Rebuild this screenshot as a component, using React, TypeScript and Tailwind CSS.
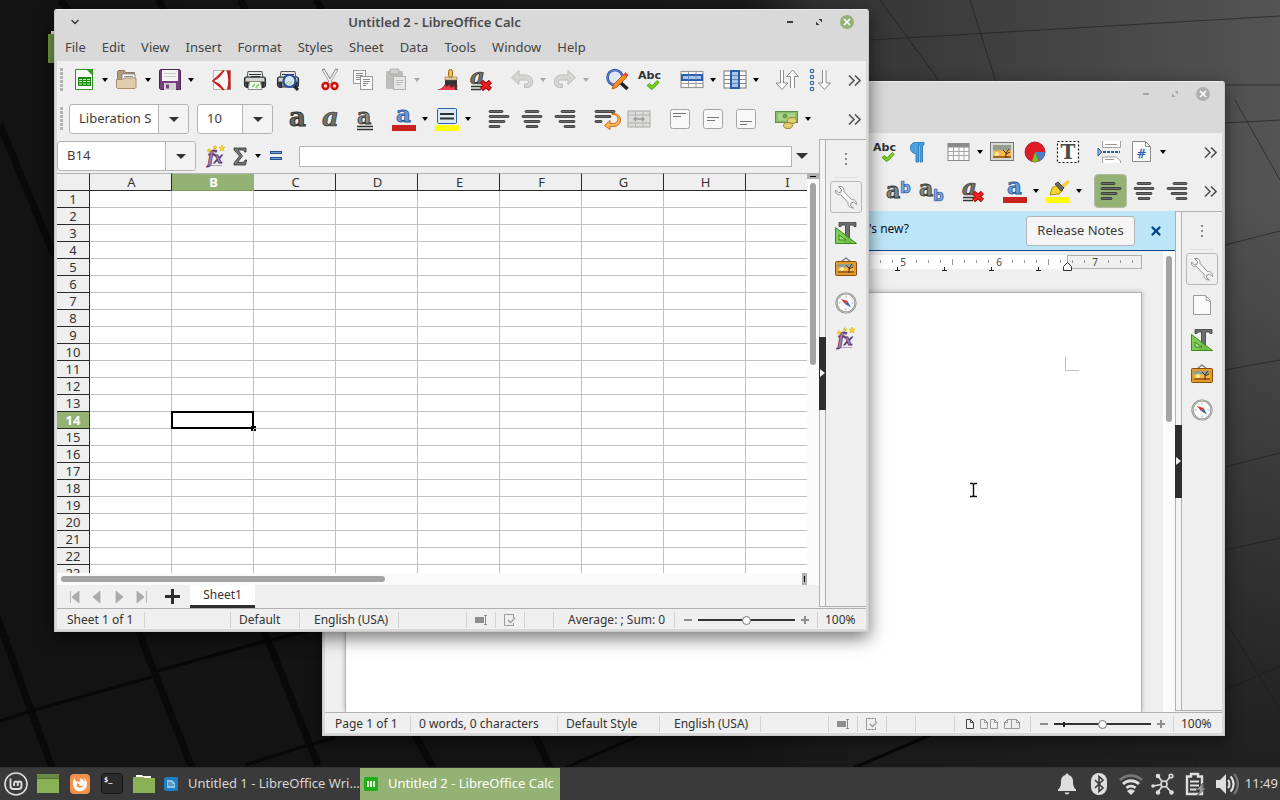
import React from 'react';
import { ChevronDown, X } from 'lucide-react';

const SERIF = '"DejaVu Serif", "Liberation Serif", serif';
const SANS = '"DejaVu Sans", "Liberation Sans", sans-serif';

const CHECK = 'M9 17.5l2.6-2 2.4 2.4 5.2-5.4 2 1.8-7.2 7.4z';

const alignBars = (rows: number[][]) =>
    rows.map(([x, w], i) => (
        <rect key={i} x={x} y={3.5 + i * 5} width={w} height="2" rx="1" fill="#6a6c69" stroke="#2c2e2d" strokeWidth="0.8" />
    ));

const clearFormat = (
    <>
        <text x="1" y="16" fontFamily={SERIF} fontSize="23" fontStyle="italic" fontWeight="bold" fill="#6f716f" stroke="#2e3432" strokeWidth="0.7">a</text>
        <path d="M2 18.500h11M2 21.500h10" stroke="#2e3432" strokeWidth="1.400" />
        <path d="M12.500 13.500l9 8m0-8l-9 8" stroke="#a40000" strokeWidth="4.600" />
        <path d="M13 14l8 7m0-7l-8 7" stroke="#f02020" strokeWidth="2.800" />
    </>
);

const printerBody = (
    <>
        <path d="M5 3.500h14l1 6H4z" fill="#e8e8e6" stroke="#555753" />
        <path d="M6 6.500h12M8 8.500h9" stroke="#2e3432" strokeWidth="1.2" />
        <rect x="1.500" y="9" width="21" height="10" rx="2" fill="#8a8c89" stroke="#2e3436" strokeWidth="1.2" />
        <rect x="3" y="10" width="18" height="3" fill="#d3d7cf" />
        <path d="M2 14h4v6H3zM18 14h4l-1 6h-3z" fill="#2e3436" />
    </>
);

const fxGlyph = (
    <>
        <text x="3.500" y="18.500" fontFamily={SERIF} fontSize="16" fontStyle="italic" fontWeight="bold" fill="#a882b0" stroke="#5c3566" strokeWidth="0.8">f</text>
        <text x="10" y="19" fontFamily={SERIF} fontSize="14" fontStyle="italic" fontWeight="bold" fill="#a882b0" stroke="#5c3566" strokeWidth="0.8">x</text>
        <path d="M5 21.500h13" stroke="#5c3566" strokeOpacity="0.4" />
        <path d="M18 1l.8 2 2.200.3-1.600 1.500.5 2.200-1.900-1.100-1.900 1.100.5-2.200L15 3.300l2.200-.3zM11 1.500l.6 1.200 1.300.2-1 .9.300 1.300-1.200-.6-1.200.6.300-1.300-1-.9 1.300-.2zM5 4.500l.6 1.200 1.300.2-1 .9.300 1.300-1.200-.6-1.200.6.300-1.300-1-.9 1.300-.2z" fill="#f7d723" stroke="#d6a800" strokeWidth="0.5" />
    </>
);

const sunset = (x: number, y: number, w: number, h: number) => (
    <>
        <rect x={x} y={y} width={w} height={h} fill="#f8b84e" />
        <rect x={x} y={y} width={w} height={h / 2 - 1} fill="#93a08e" />
        <rect x={x} y={y + h - 2} width={w} height="2" fill="#a8641c" />
        <circle cx={x + 4} cy={y + h - 4} r="2" fill="#fff3a0" />
        <path d={`M${x + w - 5} ${y + h}v-5l-3-3m3 3l3-4m-3 5l4-2`} stroke="#4d3010" strokeWidth="1" fill="none" />
    </>
);

const ICONS: Record<string, React.ReactNode> = {
    newSheet: (
        <>
            <path d="M3.500 1.500h12l5 5v15h-17z" fill="#fdfdfd" stroke="#2f8f1f" />
            <path d="M14 1h7v7z" fill="#2a9a1c" />
            <rect x="6" y="9" width="13" height="9" fill="#1f8a14" />
            <path d="M7 11.500h3m1 0h3m1 0h3M7 13.500h3m1 0h3m1 0h3M7 16h3m1 0h3m1 0h3" stroke="#c9f5b8" strokeWidth="1.2" />
        </>
    ),
    open: (
        <>
            <path d="M2.500 20V3.500l1-1h6l1 2h9v5z" fill="#b39b78" stroke="#8f7a5a" />
            <path d="M7 6h13v8H7z" fill="#fff" stroke="#777" strokeWidth="0.8" />
            <path d="M9 8.500h9" stroke="#888" />
            <path d="M1.500 11.500l6 0 1.500-1.500h12v9.500l-1 1H2.500l-1-1z" fill="#e0ccab" stroke="#a58f6c" />
        </>
    ),
    save: (
        <>
            <path d="M1.500 2.500l1-1h19l1 1v19h-20l-1-1z" fill="#75407e" stroke="#4e2457" />
            <rect x="4" y="2" width="16" height="11" fill="#f4f4f2" />
            <path d="M6 5.500h12M6 8.500h12" stroke="#c8c8c6" />
            <rect x="6" y="15" width="12" height="7" fill="#d3d3d1" />
            <rect x="8" y="16.500" width="3" height="4" fill="#75407e" />
        </>
    ),
    pdf: (
        <>
            <rect x="3.500" y="2.500" width="17" height="19" fill="#f6f6f6" stroke="#b5b5b5" />
            <path d="M14 2.500L3 13l11 9" fill="none" stroke="#cc1b1b" strokeWidth="1.600" />
            <path d="M14 2.500c-2 5-6 9-11 10.500 5 1 9 4 11 9h-1.500C10 18 7 15.500 3 13c4-2.500 7-5.500 9.500-10.500z" fill="#cc1b1b" />
            <path d="M16.500 2.500h4v19h-3.500c2-6 1.500-13-.5-19z" fill="#cc1b1b" />
        </>
    ),
    print: (
        <>
            {printerBody}
            <path d="M6.500 13.500h11l1.500 8H5z" fill="#f4fbf0" stroke="#888a85" />
            <path d="M9 19l3-3m1 4l3-4" stroke="#7fd15a" strokeWidth="1.500" />
        </>
    ),
    preview: (
        <>
            {printerBody}
            <path d="M17 17l5 5" stroke="#222" strokeWidth="3" />
            <circle cx="13.500" cy="13" r="6" fill="#d7e6f5" stroke="#2b4ea0" strokeWidth="2.200" />
            <path d="M10 16l3-3m0 4l3-4" stroke="#7fd15a" />
        </>
    ),
    cut: (
        <>
            <path d="M5 1l8.500 14.500M19 1l-8.500 14.500" stroke="#7c7e7a" strokeWidth="3" />
            <path d="M5.500 2l7.500 13M18.500 2l-7.500 13" stroke="#eeeeec" strokeWidth="1.600" />
            <circle cx="7.500" cy="18" r="3" fill="#f6d0d0" stroke="#cc1010" strokeWidth="2.400" />
            <circle cx="16.500" cy="18" r="3" fill="#f6d0d0" stroke="#cc1010" strokeWidth="2.400" />
        </>
    ),
    copy: (
        <>
            <rect x="2.500" y="2.500" width="12" height="13" fill="#fafafa" stroke="#999" />
            <path d="M5 5.500h7M5 7.500h7M5 9.500h6M5 11.500h4" stroke="#8a8a88" />
            <rect x="9.500" y="8.500" width="12" height="13" fill="#fafafa" stroke="#999" />
            <path d="M12 11.500h7M12 13.500h7M12 15.500h5M12 17.500h3" stroke="#8a8a88" />
        </>
    ),
    paste: (
        <>
            <rect x="2" y="3" width="17" height="18" rx="1" fill="#bdbdbb" />
            <rect x="6" y="1" width="9" height="5" rx="1" fill="#cfcfcd" stroke="#a5a5a5" strokeWidth="0.800" />
            <rect x="9.500" y="8.500" width="12" height="13" fill="#e6e6e6" stroke="#b0b0b0" />
            <path d="M12 12.500h7M12 14.500h7M12 16.500h5" stroke="#bbb" />
        </>
    ),
    brush: (
        <>
            <path d="M1 22c4-1 7-3 8-6h12c1 3-1 5 1 6z" fill="#5a2a2c" />
            <path d="M1 22c5-1 7-3 8-5l2 2 2-2 2 3 3-2 1 4z" fill="#ee3b4b" />
            <rect x="9" y="12" width="12" height="4" fill="#2e3436" />
            <path d="M9 9h12v3H9z" fill="#e9d2a8" stroke="#8a6a3a" strokeWidth="0.600" />
            <rect x="12.500" y="1.500" width="4" height="8" rx="2" fill="#f0c35c" stroke="#9a6418" />
        </>
    ),
    clearFormat,
    undo: <path d="M1.500 9.500l7.500-7v4.500h6.500c5 0 7.500 4 7 8-.3 2.500-2 4.500-5 4.500h-3v-3.500h2c1.500 0 2-1 2-2 0-1.500-1-2-3-2H9v4.500z" fill="#d5d5d3" stroke="#bcbcba" />,
    redo: <path d="M22.500 9.500l-7.500-7v4.500H8.500c-5 0-7.500 4-7 8 .3 2.500 2 4.500 5 4.500h3v-3.500h-2c-1.500 0-2-1-2-2 0-1.500 1-2 3-2H15v4.500z" fill="#d5d5d3" stroke="#bcbcba" />,
    find: (
        <>
            <path d="M16 15l6.500 6" stroke="#222" strokeWidth="3.500" />
            <circle cx="10" cy="9.500" r="7.500" fill="#dfe8f4" stroke="#2b4ea0" strokeWidth="2.600" />
            <circle cx="10" cy="9.500" r="7.500" fill="none" stroke="#7a9ad8" strokeWidth="0.800" />
            <path d="M7 21l1.500-4.500L19 6l3 3-10.500 10.500z" fill="#f58a1f" stroke="#a5560c" strokeWidth="0.800" />
            <path d="M18.500 6.500l2-2.500 3 3-2 2z" fill="#ef4444" />
        </>
    ),
    spell: (
        <>
            <text x="0" y="10.500" fontFamily={SANS} fontSize="11" fontWeight="bold" fill="#2e3436">Abc</text>
            <path d={CHECK} fill="#73d216" stroke="#4e9a06" strokeWidth="0.900" />
        </>
    ),
    rows: (
        <>
            <rect x="1" y="3.500" width="22" height="16" fill="#fff" stroke="#999" strokeWidth="1.200" />
            <path d="M1 15.500h22M8.500 3v17M16 3v17" stroke="#999" />
            <rect x="2" y="7" width="20" height="5" fill="#a9c6e8" stroke="#2a5fae" strokeWidth="2" />
            <path d="M8.500 7v5M16 7v5" stroke="#5a8cc8" />
        </>
    ),
    cols: (
        <>
            <rect x="1" y="3" width="22" height="17" fill="#fff" stroke="#888" strokeWidth="1.200" />
            <path d="M1 7.500h22M1 11.500h22M1 15.500h22" stroke="#888" />
            <rect x="8" y="3" width="8" height="17" fill="#a9c6e8" stroke="#2a5fae" strokeWidth="2" />
            <path d="M9 7.500h6M9 11.500h6M9 15.500h6" stroke="#5a8cc8" />
        </>
    ),
    sort: (
        <>
            <path d="M5.500 2v13H1l6 6.500 6-6.500H8.500V2" fill="#fdfdfd" stroke="#8a8c89" />
            <path d="M15.500 20V8.500H11.500l6-6.500 6 6.500h-4V20" fill="#fdfdfd" stroke="#8a8c89" />
        </>
    ),
    sortDown: (
        <>
            <path d="M14.500 2v13h-4l6 6.500 6-6.500h-4.500V2" fill="#fdfdfd" stroke="#8a8c89" />
            {[3, 9, 15, 21].map(y => <circle key={y} cx="4" cy={y} r="1.700" fill="#fff" stroke="#3465a4" strokeWidth="1.200" />)}
        </>
    ),
    bold: <text x="2" y="19" fontFamily={SERIF} fontSize="26" fontWeight="bold" fill="#666866" stroke="#2c3130" strokeWidth="1">a</text>,
    italic: <text x="2" y="19" fontFamily={SERIF} fontSize="26" fontStyle="italic" fontWeight="bold" fill="#6f716f" stroke="#2c3130" strokeWidth="0.700">a</text>,
    underline: (
        <>
            <text x="4" y="17" fontFamily={SERIF} fontSize="22" fontWeight="bold" fill="#8a8a88" stroke="#2c3130" strokeWidth="0.800">a</text>
            <path d="M4 19.500h16M4 22.500h16" stroke="#2c3130" strokeWidth="1.400" />
        </>
    ),
    fontColor: (
        <>
            <text x="4" y="15" fontFamily={SERIF} fontSize="23" fontWeight="bold" fill="#6a9bd8" stroke="#2a569c" strokeWidth="0.800">a</text>
            <rect y="18" width="24" height="6" fill="#c9211e" />
        </>
    ),
    cellColor: (
        <>
            <rect x="2.500" y="1.500" width="19" height="15" rx="1" fill="#dbe8f6" stroke="#2a5fae" />
            <path d="M5 7h14M5 11.500h14" stroke="#2c3130" strokeWidth="2" />
            <rect y="18" width="24" height="6" fill="#ffff00" />
        </>
    ),
    highlight: (
        <>
            <path d="M4 16l2-7 5-3 6 5-4 4z" fill="#f5d22c" stroke="#b39200" />
            <path d="M14 7l8-6 2 2-7 7z" fill="#f2cf3c" />
            <path d="M9 5l3-2 6 6-3 3z" fill="#6a6c69" stroke="#333" strokeWidth="0.800" />
            <rect y="18" width="24" height="6" fill="#ffff00" />
        </>
    ),
    alignLeft: alignBars([[2, 14], [2, 20], [2, 16], [2, 11]]),
    alignCenter: alignBars([[5, 14], [2, 20], [4, 16], [6, 12]]),
    alignRight: alignBars([[8, 14], [2, 20], [6, 16], [11, 11]]),
    wrap: (
        <>
            {alignBars([[1, 20], [1, 16], [1, 7]])}
            <path d="M18 9.500h1.500a4 4 0 010 9H16v-3l-5.500 5 5.500 4v-3h4a6.500 6.500 0 000-13h-2z" fill="#fcb65a" stroke="#c4640a" strokeWidth="0.900" transform="translate(0 -2)" />
        </>
    ),
    merge: (
        <>
            <rect x="1" y="4" width="22" height="16" fill="#dcdcda" stroke="#b2b2b0" strokeWidth="1.200" />
            <path d="M1 8h22M1 16h22M8.500 4v4m0 8v4M16 4v4m0 8v4" stroke="#b2b2b0" />
            <path d="M7 12h10M9 10l-2 2 2 2m6-4l2 2-2 2" stroke="#999" strokeWidth="1.300" fill="none" />
        </>
    ),
    vTop: (
        <>
            <rect x="2.500" y="2.500" width="19" height="19" rx="2" fill="#f8f8f8" stroke="#a5a5a3" />
            <path d="M5 6.500h13M5 9.500h8" stroke="#777" />
        </>
    ),
    vMiddle: (
        <>
            <rect x="2.500" y="2.500" width="19" height="19" rx="2" fill="#f8f8f8" stroke="#a5a5a3" />
            <path d="M6 10.500h12M6 13.500h8" stroke="#777" />
        </>
    ),
    vBottom: (
        <>
            <rect x="2.500" y="2.500" width="19" height="19" rx="2" fill="#f8f8f8" stroke="#a5a5a3" />
            <path d="M6 14.500h12M6 17.500h7" stroke="#777" />
        </>
    ),
    currency: (
        <>
            <rect x="0.500" y="4.500" width="22" height="11" fill="#8ac06a" stroke="#5d8f45" />
            <rect x="3" y="6.500" width="17" height="7" fill="#a9d68a" />
            <circle cx="10" cy="9" r="2.500" fill="#6ca04c" />
            <ellipse cx="17" cy="13.500" rx="4.500" ry="3" fill="#e3cf72" stroke="#9a8530" />
            <ellipse cx="13" cy="18.500" rx="4.500" ry="3" fill="#e3cf72" stroke="#9a8530" />
        </>
    ),
    fx: fxGlyph,
    sum: <path d="M6 4h12v4h-1.500c-.3-1.500-1-2-2.500-2h-4l4.500 6-5 6.500H14c2 0 2.500-1 3-2.500h1.500l-1 5H6v-2l5.500-7L6 6z" fill="#777977" stroke="#2c3130" strokeWidth="0.800" />,
    equals: (
        <>
            <rect x="6.500" y="7.500" width="11" height="2" fill="#6f9fd8" stroke="#20508f" />
            <rect x="6.500" y="13.500" width="11" height="2" fill="#6f9fd8" stroke="#20508f" />
        </>
    ),
    pilcrow: <path d="M18 2.500H9.500C6 2.500 4.500 5 4.500 8s2 5 4.500 5.500h1V22h2.500V5h1.500v17h2.500V5H18z" fill="#4aa3e0" stroke="#2777b5" strokeWidth="0.900" />,
    table: (
        <>
            <rect x="1" y="3.500" width="21" height="17" fill="#fcfcfc" stroke="#888" />
            <rect x="1" y="3.500" width="21" height="4" fill="#8a8a88" />
            <path d="M1 11.500h21M1 15.500h21M6.500 7v13M12 7v13M17 7v13" stroke="#a5a5a3" />
        </>
    ),
    image: (
        <>
            <rect x="0.500" y="2.500" width="23" height="18" fill="#d8d8d6" stroke="#777" />
            {sunset(3, 5, 18, 13)}
        </>
    ),
    pie: (
        <>
            <circle cx="12" cy="12" r="10" fill="#e01b24" stroke="#a51018" strokeWidth="0.800" />
            <path d="M12 12h10a10 10 0 01-5.500 9z" fill="#4a7fc8" />
            <path d="M12 12l4 9.200a10 10 0 01-7 0z" fill="#6cc52a" />
        </>
    ),
    textBox: (
        <>
            <rect x="1.500" y="1.500" width="21" height="21" fill="#fdfdfd" stroke="#111" strokeDasharray="2 2" strokeWidth="1.200" />
            <text x="4.500" y="19" fontFamily={SERIF} fontSize="20" fontWeight="bold" fill="#4a4c4a">T</text>
        </>
    ),
    pageBreak: (
        <>
            <path d="M5.500 1v6.500h18V1M5.500 23v-6h14l4 4v2" fill="#fdfdfd" stroke="#a0a09e" />
            <path d="M8 4.500h12M8 19.500h9" stroke="#999" />
            <path d="M1 8v8l4-4z" fill="#8ab0dc" stroke="#2a5fae" />
            <path d="M6 12h17" stroke="#2a5fae" strokeWidth="2" strokeDasharray="3 1" />
        </>
    ),
    field: (
        <>
            <path d="M2.500 1.500h13l5 5v15h-18z" fill="#fafafa" stroke="#8a8a88" />
            <path d="M15.500 1.500v5h5" fill="none" stroke="#8a8a88" />
            <text x="6.500" y="17.500" fontFamily={SANS} fontSize="12" fill="#2a5fae" stroke="#2a5fae" strokeWidth="0.300">#</text>
        </>
    ),
    superscript: (
        <>
            <text x="0" y="19" fontFamily={SERIF} fontSize="22" fontWeight="bold" fill="#858785" stroke="#2c3130" strokeWidth="0.800">a</text>
            <text x="14" y="14" fontFamily={SANS} fontSize="15" fontWeight="bold" fill="#7fa9de" stroke="#2a569c" strokeWidth="0.700">b</text>
        </>
    ),
    subscript: (
        <>
            <text x="0" y="17" fontFamily={SERIF} fontSize="22" fontWeight="bold" fill="#858785" stroke="#2c3130" strokeWidth="0.800">a</text>
            <text x="14" y="22" fontFamily={SANS} fontSize="15" fontWeight="bold" fill="#7fa9de" stroke="#2a569c" strokeWidth="0.700">b</text>
        </>
    ),
    wrench: <path d="M1.500 5l3 3 2.500-1 .5-2.500-3-3c3.500-.8 6 1.500 5.500 5l7.500 8c3-.5 5.500 2 5 5l-3-2.500-2.500 1-.5 2.500 3 2.500c-4 0-6-2.500-5.500-5.500l-7.500-8C3.500 10.500 1 8.500 1.500 5z" fill="#f8f8f6" stroke="#8e908d" strokeWidth="1" />,
    page: (
        <>
            <path d="M3.500 2.500h12l5 5v14h-17z" fill="#fafafa" stroke="#9a9a98" />
            <path d="M14.500 2.500c2 1 2 3 1.500 5 2-.5 4 0 4.500 2" fill="#ececea" stroke="#9a9a98" />
        </>
    ),
    styles: (
        <>
            <path d="M5 1.500h17v4h-2l-1-1.500h-3.500v15l2 1v1.500h-8V20l2-1V4H8L7 5.500H5z" fill="#6d6f6d" stroke="#3a3c3b" strokeWidth="0.800" />
            <path d="M1.500 6.500v16h21z" fill="#73c847" fillOpacity="0.900" stroke="#3c8a18" />
            <path d="M5 14v5h7z" fill="#a8e088" stroke="#3c8a18" />
        </>
    ),
    gallery: (
        <>
            <path d="M8 5l4-3 4 3" fill="none" stroke="#777" strokeWidth="1.200" />
            <rect x="1.500" y="5.500" width="21" height="14" rx="1" fill="#e09a30" stroke="#8a4e08" />
            {sunset(4, 8, 16, 9)}
        </>
    ),
    compass: (
        <>
            <circle cx="12" cy="12" r="9.500" fill="#fbfbfb" stroke="#888a85" strokeWidth="2.200" />
            <circle cx="12" cy="12" r="9.500" fill="none" stroke="#d3d7cf" strokeWidth="0.800" />
            <path d="M12 4.500v2M12 17.500v2M4.500 12h2M17.500 12h2" stroke="#aaa" />
            <path d="M7 8l6.500 2-2.500 3z" fill="#e02b2b" />
            <path d="M17 16.500l-6-3.500 2.500-3z" fill="#3f66a8" />
        </>
    ),
};

const Icon: React.FC<{ name: string }> = ({ name }) => (
    <svg viewBox="0 0 24 24" className="size-6 shrink-0 overflow-visible" fill="none" aria-hidden="true">
        {ICONS[name]}
    </svg>
);

const Arrow: React.FC<{ className?: string }> = ({ className = 'text-black' }) => (
    <svg viewBox="0 0 6 4" className={`h-1 w-1.5 shrink-0 ${className}`} aria-hidden="true">
        <path d="M0 0h6L3 4z" fill="currentColor" />
    </svg>
);

interface ToolProps {
    icon: string;
    label: string;
    menu?: boolean;
    disabled?: boolean;
    active?: boolean;
}

const Tool: React.FC<ToolProps> = ({ icon, label, menu, disabled, active }) => (
    <>
        <button
            aria-label={label}
            disabled={disabled}
            className={`flex h-[34px] w-[33px] shrink-0 items-center justify-center rounded-sm ${active ? 'border border-[#b5bda9] bg-[#93b274]' : ''}`}
        >
            <Icon name={icon} />
        </button>
        {menu && (
            <button aria-label={`${label} options`} disabled={disabled} className="flex h-8 w-2.5 shrink-0 items-center justify-center">
                <Arrow className={disabled ? 'text-[#a8a8a8]' : 'text-black'} />
            </button>
        )}
    </>
);

const Gap: React.FC = () => <span className="w-[9px] shrink-0" />;

const Grip: React.FC = () => (
    <svg viewBox="0 0 3 24" className="mr-1 ml-[3px] h-6 w-[3px] shrink-0" aria-hidden="true">
        <path d="M1.500 0v24" stroke="#b4b4b4" strokeWidth="3" strokeDasharray="3 1" />
    </svg>
);

const More: React.FC = () => (
    <button aria-label="More tools" className="flex h-8 w-[18px] shrink-0 items-center">
        <svg viewBox="0 0 13 11" className="h-[11px] w-[13px]" fill="none" stroke="#555" strokeWidth="1.600" aria-hidden="true">
            <path d="M1 0.500l5 5-5 5M7 0.500l5 5-5 5" />
        </svg>
    </button>
);

const Combo: React.FC<{ label: string; value: string; className: string }> = ({ label, value, className }) => (
    <div className={`flex h-[30px] shrink-0 overflow-hidden rounded-[3px] border border-[#b4b4b4] bg-white ${className}`}>
        <input aria-label={label} defaultValue={value} className="min-w-0 flex-1 pl-[9px] text-[13px] text-[#3c3c3c] outline-none" />
        <button aria-label={`${label} list`} className="flex w-[30px] items-center justify-center border-l border-[#b4b4b4] bg-[#f3f3f3]">
            <svg viewBox="0 0 10 5" className="h-[5px] w-2.5" aria-hidden="true">
                <path d="M0 0h10L5 5z" fill="#333" />
            </svg>
        </button>
    </div>
);

const TitleBar: React.FC<{ title?: string; focused?: boolean }> = ({ title, focused }) => (
    <header className={`flex h-6 shrink-0 items-center ${focused ? 'text-[#3c3c3c]' : 'text-[#a3a3a3]'}`}>
        <button aria-label="Window menu" className="ml-3 w-4">
            <ChevronDown className="size-3" strokeWidth={3} />
        </button>
        <h1 className="flex-1 text-center text-[13px] leading-6 font-semibold text-[#4a4a4a]">{title}</h1>
        <div className="mr-3 flex items-center justify-end gap-[15px]">
            <button aria-label="Minimize" className="flex size-3 items-center justify-center">
                <span className="h-0.5 w-1.5 bg-current" />
            </button>
            <button aria-label="Restore" className="ml-0.5 flex size-3 items-center justify-center">
                <svg viewBox="0 0 6 6" className="size-1.5" fill="currentColor" aria-hidden="true">
                    <path d="M2.500 0H6v3.500zM0 2.500V6h3.500z" />
                </svg>
            </button>
            <button
                aria-label="Close"
                className={`flex size-3.5 items-center justify-center rounded-full text-white ${focused ? 'bg-[#93b274]' : 'bg-[#b0b0b0]'}`}
            >
                <X className="size-2.5" strokeWidth={4} />
            </button>
        </div>
    </header>
);

const Splitter: React.FC = () => (
    <div className="mb-px flex w-[7px] shrink-0 flex-col justify-center border border-[#b0b0b0] bg-[#f4f4f4]">
        <button aria-label="Hide sidebar" className="-mx-px flex h-[73px] items-center justify-center bg-[#2e2e2e]">
            <svg viewBox="0 0 5 8" className="h-2 w-[5px]" aria-hidden="true">
                <path d="M0 0l5 4-5 4z" fill="#f0f0f0" />
            </svg>
        </button>
    </div>
);

const Sidebar: React.FC<{ decks: string[] }> = ({ decks }) => (
    <aside className="mb-px flex w-10 shrink-0 flex-col items-center border-y border-[#b0b0b0] bg-[#efefef]">
        <button aria-label="Sidebar settings" className="flex h-[38px] w-6 flex-col items-center justify-center gap-[3px] border-b border-[#dedede]">
            <span className="size-0.5 bg-[#888]" />
            <span className="size-0.5 bg-[#888]" />
            <span className="size-0.5 bg-[#888]" />
        </button>
        <button aria-label="Properties" className="my-[3px] flex size-8 items-center justify-center rounded-[3px] border border-[#b8b8b8]">
            <Icon name="wrench" />
        </button>
        {decks.map(deck => (
            <button key={deck} aria-label={deck} className="flex h-[35px] w-8 items-center justify-center pb-0.5">
                <Icon name={deck} />
            </button>
        ))}
    </aside>
);

const Field: React.FC<{ className: string; children?: React.ReactNode }> = ({ className, children }) => (
    <div className={`flex h-4 shrink-0 items-center whitespace-nowrap not-first:border-l not-first:border-[#d2d2d2] ${className}`}>{children}</div>
);

const InsertMode: React.FC = () => (
    <svg viewBox="0 0 12 10" className="h-2.5 w-3" aria-hidden="true">
        <path d="M0 2h9v6H0z" fill="#8e8e8e" />
        <path d="M9 .5h3M9 9.500h3M10.500 0v10" stroke="#8e8e8e" />
    </svg>
);

const DocState: React.FC = () => (
    <svg viewBox="0 0 12 12" className="size-3" fill="none" stroke="#9a9a9a" aria-hidden="true">
        <path d="M9.500 4V.500h-9v11h9V9" />
        <path d="M4 6l2.500 2.500L11 4" strokeWidth="1.300" />
    </svg>
);

const Zoom: React.FC<{ marked?: boolean }> = ({ marked }) => (
    <>
        <Field className="w-[143px] justify-center gap-1.5 pl-px">
            <button aria-label="Zoom out" className="flex size-2 items-center">
                <span className="h-0.5 w-2 bg-[#8e8e8e]" />
            </button>
            <span className="relative flex h-2 items-center">
                {marked && <span className="absolute left-[9px] h-[5px] w-0.5 bg-[#222]" />}
                <input
                    aria-label="Zoom"
                    type="range"
                    className="h-0.5 w-[97px] appearance-none bg-[#333] [&::-webkit-slider-thumb]:size-[9px] [&::-webkit-slider-thumb]:appearance-none [&::-webkit-slider-thumb]:rounded-full [&::-webkit-slider-thumb]:border [&::-webkit-slider-thumb]:border-[#777] [&::-webkit-slider-thumb]:bg-white"
                />
            </span>
            <button aria-label="Zoom in" className="flex size-2 items-center justify-center">
                <svg viewBox="0 0 8 8" className="size-2" stroke="#8e8e8e" strokeWidth="2" aria-hidden="true">
                    <path d="M0 4h8M4 0v8" />
                </svg>
            </button>
        </Field>
        <Field className="w-[49px] pl-[7px]">100%</Field>
    </>
);

const ViewModes: React.FC = () => (
    <svg viewBox="0 0 56 12" className="h-3 w-14" fill="none" stroke="#999" aria-hidden="true">
        <path d="M1.500 1.500h4l3 3v6h-7zM5.500 1.500v3h3" stroke="#444" />
        <path d="M15.500 1.500h4l3 3v6h-7zM19.500 1.500v3h3M25.500 1.500h4l3 3v6h-7zM29.500 1.500v3h3" />
        <path d="M39.500 4.500l3-3h4v9h-7zM46.500 1.500h5l3 3v6h-8zM42.500 1.500v3h-3M51.500 1.500v3h3" />
    </svg>
);

const MENUS = ['File', 'Edit', 'View', 'Insert', 'Format', 'Styles', 'Sheet', 'Data', 'Tools', 'Window', 'Help'];
const COLUMNS = ['A', 'B', 'C', 'D', 'E', 'F', 'G', 'H', 'I'];
const ROWS = Array.from({ length: 23 }, (_, i) => i + 1);

const SheetGrid: React.FC = () => (
    <div className="flex min-h-0 flex-1">
        <div className="min-w-0 flex-1 overflow-hidden bg-white">
            <table className="w-[771px] table-fixed border-separate border-spacing-0 text-[13px] leading-4 text-[#333]">
                <thead>
                    <tr className="h-[18px] bg-[#efefef]">
                        <th aria-label="Select all" className="w-[33px] border-t border-r border-b border-t-[#b4b4b4] border-r-[#2a2a2a] border-b-[#2a2a2a] p-0" />
                        {COLUMNS.map(col => (
                            <th
                                key={col}
                                scope="col"
                                className={`w-[82px] border-t border-r border-b border-t-[#b4b4b4] p-0 pl-0.5 ${
                                    col === 'B'
                                        ? 'border-r-[#93b274] border-b-[#7d9a60] bg-[#93b274] font-bold text-white'
                                        : 'border-r-[#2a2a2a] border-b-[#2a2a2a] font-normal'
                                }`}
                            >
                                {col}
                            </th>
                        ))}
                    </tr>
                </thead>
                <tbody>
                    {ROWS.map(row => (
                        <tr key={row} className="h-[17px]">
                            <th
                                scope="row"
                                className={`border-r border-b border-r-[#2a2a2a] border-b-[#2a2a2a] p-0 ${
                                    row === 14 ? 'bg-[#93b274] font-bold text-white' : 'bg-[#efefef] font-normal'
                                }`}
                            >
                                {row}
                            </th>
                            {COLUMNS.map(col => (
                                <td key={col} className="relative border-r border-b border-[#c0c0c0] p-0">
                                    {row === 14 && col === 'B' && (
                                        <span className="absolute -inset-px border-2 border-black">
                                            <span className="absolute -right-1 -bottom-1 size-[5px] bg-black" />
                                        </span>
                                    )}
                                </td>
                            ))}
                        </tr>
                    ))}
                </tbody>
            </table>
        </div>
        <div className="flex w-3 shrink-0 flex-col items-center gap-1 bg-[#fbfbfb]">
            <span className="flex h-1.5 w-full shrink-0 items-center justify-center bg-[#b0b0b0]">
                <span className="h-px w-1.5 bg-black" />
            </span>
            <span className="h-[182px] w-1.5 rounded-full bg-[#a3a3a3]" />
        </div>
    </div>
);

const SheetTabs: React.FC = () => (
    <nav className="flex h-[23px] shrink-0 items-center pl-3 text-[#aaa]">
        {['M1.500 0v12M10 0L3 6l7 6z', 'M9 0L2 6l7 6z', 'M3 0l7 6-7 6z', 'M2 0l7 6-7 6zM11.500 0v12'].map((d, i) => (
            <button key={d} aria-label={['First sheet', 'Previous sheet', 'Next sheet', 'Last sheet'][i]} className="w-[22px]">
                <svg viewBox="0 0 12 12" className="size-3" fill="currentColor" stroke="currentColor" strokeWidth="0.800" aria-hidden="true">
                    <path d={d} />
                </svg>
            </button>
        ))}
        <button aria-label="Add sheet" className="ml-2 text-[#2e2e2e]">
            <svg viewBox="0 0 15 15" className="size-[15px]" stroke="currentColor" strokeWidth="3" aria-hidden="true">
                <path d="M0 7.500h15M7.500 0v15" />
            </svg>
        </button>
        <button className="ml-2.5 h-[23px] w-[65px] border-b-3 border-[#2e2e2e] bg-white text-xs text-[#333]">Sheet1</button>
    </nav>
);

const CalcWindow: React.FC = () => (
    <section
        aria-label="LibreOffice Calc"
        className="absolute top-[9px] right-[411px] bottom-[168px] left-[54px] flex flex-col overflow-hidden rounded-t-[3px] border border-[#c9c9c9] border-t-[#ededed] bg-[#d9d9d9] px-0.5 pb-0.5 text-[#3c3c3c] shadow-[0_6px_18px_rgba(0,0,0,0.55)]"
    >
        <TitleBar title="Untitled 2 - LibreOffice Calc" focused />
        <nav className="flex h-[27px] shrink-0 items-center text-[13px] text-[#444]">
            {MENUS.map(menu => (
                <button key={menu} className="px-2">{menu}</button>
            ))}
        </nav>
        <div className="flex h-[38px] shrink-0 items-center bg-[#efefef]">
            <Grip />
            <Tool icon="newSheet" label="New" menu />
            <Tool icon="open" label="Open" menu />
            <Tool icon="save" label="Save" menu />
            <Gap />
            <Tool icon="pdf" label="Export as PDF" />
            <Tool icon="print" label="Print" />
            <Tool icon="preview" label="Print preview" />
            <Gap />
            <Tool icon="cut" label="Cut" />
            <Tool icon="copy" label="Copy" />
            <Tool icon="paste" label="Paste" menu disabled />
            <Gap />
            <Tool icon="brush" label="Clone formatting" />
            <Tool icon="clearFormat" label="Clear formatting" />
            <span className="w-2 shrink-0" />
            <Tool icon="undo" label="Undo" menu disabled />
            <Tool icon="redo" label="Redo" menu disabled />
            <Gap />
            <Tool icon="find" label="Find and replace" />
            <Tool icon="spell" label="Spelling" />
            <Gap />
            <Tool icon="rows" label="Row" menu />
            <Tool icon="cols" label="Column" menu />
            <Gap />
            <Tool icon="sort" label="Sort" />
            <Tool icon="sortDown" label="Sort ascending" />
            <span className="flex-1" />
            <More />
        </div>
        <div className="flex h-10 shrink-0 items-center bg-[#efefef]">
            <Grip />
            <Combo label="Font name" value="Liberation S" className="ml-0.5 w-[120px]" />
            <span className="w-2 shrink-0" />
            <Combo label="Font size" value="10" className="w-[76px]" />
            <Gap />
            <Tool icon="bold" label="Bold" />
            <Tool icon="italic" label="Italic" />
            <Tool icon="underline" label="Underline" />
            <span className="w-1.5 shrink-0" />
            <Tool icon="fontColor" label="Font color" menu />
            <Tool icon="cellColor" label="Background color" menu />
            <Gap />
            <Tool icon="alignLeft" label="Align left" />
            <Tool icon="alignCenter" label="Align center" />
            <Tool icon="alignRight" label="Align right" />
            <span className="w-2 shrink-0" />
            <Tool icon="wrap" label="Wrap text" />
            <Tool icon="merge" label="Merge cells" disabled />
            <span className="w-2 shrink-0" />
            <Tool icon="vTop" label="Align top" />
            <Tool icon="vMiddle" label="Center vertically" />
            <Tool icon="vBottom" label="Align bottom" />
            <span className="w-2 shrink-0" />
            <Tool icon="currency" label="Format as currency" menu />
            <span className="flex-1" />
            <More />
        </div>
        <div className="flex min-h-0 flex-1 bg-[#efefef]">
            <div className="flex min-w-0 flex-1 flex-col">
                <div className="flex h-[34px] shrink-0 items-center">
                    <Combo label="Name box" value="B14" className="w-[139px]" />
                    <span className="ml-2 flex items-center">
                        <button aria-label="Function wizard" className="flex w-6 justify-center"><Icon name="fx" /></button>
                        <button aria-label="Select function" className="flex w-6 justify-center"><Icon name="sum" /></button>
                        <button aria-label="Function list" className="flex w-3 justify-center"><Arrow /></button>
                        <button aria-label="Formula" className="flex w-6 justify-center"><Icon name="equals" /></button>
                    </span>
                    <input aria-label="Input line" className="ml-[11px] h-[21px] min-w-0 flex-1 border border-[#b4b4b4] bg-white px-1 text-[13px] outline-none" />
                    <button aria-label="Expand formula bar" className="flex w-[27px] items-center justify-center pr-2">
                        <svg viewBox="0 0 12 6" className="h-1.5 w-3 shrink-0" aria-hidden="true">
                            <path d="M0 0h12L6 6z" fill="#333" />
                        </svg>
                    </button>
                </div>
                <SheetGrid />
                <div className="flex h-3 shrink-0 items-center bg-[#fbfbfb] pr-3 pl-1">
                    <span className="h-1.5 w-[324px] rounded-full bg-[#a3a3a3]" />
                    <span className="ml-auto flex h-3 w-[5px] items-center justify-center bg-[#b0b0b0]">
                        <span className="h-1.5 w-px bg-black" />
                    </span>
                </div>
                <SheetTabs />
            </div>
            <Splitter />
            <Sidebar decks={['styles', 'gallery', 'compass', 'fx']} />
        </div>
        <footer className="flex h-[21px] shrink-0 items-center border-t border-[#b0b0b0] bg-[#efefef] pt-0.5 text-xs text-[#333]">
            <Field className="w-[87px] pl-2.5">Sheet 1 of 1</Field>
            <Field className="w-[86px]" />
            <Field className="w-[69px] pl-2">Default</Field>
            <Field className="w-[99px] pl-3.5">English (USA)</Field>
            <Field className="min-w-0 flex-1" />
            <Field className="w-[29px] justify-center"><InsertMode /></Field>
            <Field className="w-[29px] justify-center"><DocState /></Field>
            <Field className="w-[29px]" />
            <Field className="w-[121px] pl-3.5">Average: ; Sum: 0</Field>
            <Zoom />
        </footer>
    </section>
);

const Ruler: React.FC = () => {
    const ticks = Array.from({ length: 22 }, (_, i) => 10 + i * 12).filter(x => (x - 34) % 96 !== 0);
    return (
        <svg viewBox="0 0 272 18" className="h-[18px] w-[272px]" aria-hidden="true">
            <rect width="198" height="14" fill="#fff" />
            <rect x="197.500" y="0.500" width="74" height="13" fill="#efefef" stroke="#b0b0b0" />
            {ticks.map(x => (
                <path key={x} d={(x - 34 + 96) % 96 === 48 ? `M${x}.5 4v6` : `M${x}.5 5v3`} stroke="#999" />
            ))}
            {[5, 6, 7].map((n, i) => (
                <text key={n} x={33 + i * 96} y="10.500" textAnchor="middle" fontSize="10" fill="#444">{n}</text>
            ))}
            {[27, 74, 121, 168].map(x => <path key={x} d={`M${x}.5 12v3.500M${x - 2} 15.500h5`} stroke="#222" />)}
            <path d="M193.500 15.500v-4l4-4 4 4v4z" fill="#fff" stroke="#333" />
        </svg>
    );
};

const WriterWindow: React.FC = () => (
    <section
        aria-label="LibreOffice Writer"
        className="absolute top-[81px] right-[55px] bottom-16 left-[322px] flex flex-col overflow-hidden rounded-t-[3px] border border-[#c9c9c9] border-t-[#ededed] bg-[#d9d9d9] px-0.5 pb-0.5 text-[#3c3c3c] shadow-[0_4px_16px_rgba(0,0,0,0.5)]"
    >
        <TitleBar />
        <div className="flex h-[65px] shrink-0 items-center justify-end border-t-27 border-[#d9d9d9] bg-[#efefef]">
            <Tool icon="spell" label="Spelling" />
            <Tool icon="pilcrow" label="Formatting marks" />
            <span className="w-2 shrink-0" />
            <Tool icon="table" label="Table" menu />
            <Tool icon="image" label="Image" />
            <Tool icon="pie" label="Chart" />
            <Tool icon="textBox" label="Text box" />
            <span className="w-2 shrink-0" />
            <Tool icon="pageBreak" label="Page break" />
            <Tool icon="field" label="Field" menu />
            <span className="w-9 shrink-0" />
            <More />
        </div>
        <div className="flex h-10 shrink-0 items-center justify-end bg-[#efefef]">
            <Tool icon="superscript" label="Superscript" />
            <Tool icon="subscript" label="Subscript" />
            <Gap />
            <Tool icon="clearFormat" label="Clear formatting" />
            <Gap />
            <Tool icon="fontColor" label="Font color" menu />
            <Tool icon="highlight" label="Highlighting" menu />
            <span className="w-2.5 shrink-0" />
            <Tool icon="alignLeft" label="Align left" active />
            <Tool icon="alignCenter" label="Align center" />
            <Tool icon="alignRight" label="Align right" />
            <span className="w-[11px] shrink-0" />
            <More />
        </div>
        <div className="flex min-h-0 flex-1 bg-[#efefef]">
            <div className="flex min-w-0 flex-1 flex-col">
                <div className="flex h-10 shrink-0 items-center justify-end border-b border-[#00478a] bg-[#bde5f8] text-[13px] text-[#111]">
                    <p className="mr-[117px] pb-1 text-xs">learn what's new?</p>
                    <button className="h-[30px] w-[109px] rounded-[3px] border border-[#b4b4b4] bg-[#f5f5f5] pt-px text-[#3c3c3c]">Release Notes</button>
                    <button aria-label="Close infobar" className="mr-3 ml-3.5 text-[#00478a]">
                        <X className="size-3.5" strokeWidth={4} />
                    </button>
                </div>
                <div className="flex min-h-0 flex-1">
                    <div className="flex min-w-0 flex-1 flex-col items-end pt-1 pr-[21px] pl-5">
                        <Ruler />
                        <div className="mt-[19px] flex w-full flex-1 justify-end border border-b-0 border-[#b4b4b4] bg-white shadow-[0_0_5px_rgba(0,0,0,0.25)]">
                            <span className="mt-16 mr-[62px] size-3.5 border-b border-l border-[#c0c0c0]" />
                        </div>
                    </div>
                    <div className="flex w-3 shrink-0 justify-center bg-[#fbfbfb] pt-[5px]">
                        <span className="h-[166px] w-1.5 rounded-full bg-[#a3a3a3]" />
                    </div>
                </div>
            </div>
            <Splitter />
            <Sidebar decks={['page', 'styles', 'gallery', 'compass']} />
        </div>
        <footer className="flex h-[21px] shrink-0 items-center border-t border-[#b0b0b0] bg-[#efefef] pt-0.5 text-xs text-[#333]">
            <Field className="w-[85px] pl-2.5">Page 1 of 1</Field>
            <Field className="w-[147px] pl-2">0 words, 0 characters</Field>
            <Field className="w-[102px] pl-2">Default Style</Field>
            <Field className="w-[101px] pl-3.5">English (USA)</Field>
            <Field className="min-w-0 flex-1" />
            <Field className="w-[29px] justify-center"><InsertMode /></Field>
            <Field className="w-[29px] justify-center"><DocState /></Field>
            <Field className="w-[29px]" />
            <Field className="w-[39px]" />
            <Field className="w-[76px] justify-center"><ViewModes /></Field>
            <Zoom marked />
        </footer>
    </section>
);

const Wallpaper: React.FC = () => (
    <svg viewBox="0 0 1280 800" preserveAspectRatio="none" className="absolute inset-0 size-full" aria-hidden="true">
        <defs>
            <linearGradient id="wall" x1="0" y1="0" x2="1" y2="0">
                <stop offset="0" stopColor="#131313" />
                <stop offset="0.58" stopColor="#191919" />
                <stop offset="0.64" stopColor="#333" />
                <stop offset="1" stopColor="#545454" />
            </linearGradient>
            <linearGradient id="shade" x1="0" y1="0" x2="0" y2="1">
                <stop offset="0.25" stopColor="#131313" stopOpacity="0" />
                <stop offset="0.850" stopColor="#131313" stopOpacity="0.700" />
                <stop offset="1" stopColor="#131313" stopOpacity="0.850" />
            </linearGradient>
        </defs>
        <rect width="1280" height="800" fill="url(#wall)" />
        <rect width="1280" height="800" fill="url(#shade)" />
        <g fill="none" stroke="#090909" strokeWidth="7">
            <path d="M-4 614L52 768M136 625l56 143M262 625l56 140M0 125l54 130M415 735l22 40M535 735l18 40" />
            <path d="M60 0l8 10M158 0l6 10M240 0l6 10M316 0l6 10" />
        </g>
        <g fill="none" stroke="#080808" strokeWidth="3">
            <path d="M0 721L34 710 152 677M157 671l105-29 60-14M245 765l60-19 30-8M565 768l80-35" />
            <path d="M853 768l80-34" />
        </g>
        <g fill="none" stroke="#1a1a1a" strokeOpacity="0.6">
            <path d="M880 0l60 82M970 0l26 82M870 40l410-24M1225 85h55M1225 123l55-3M1225 245l55-14M1225 370l55-10M1225 467l55-14M1225 550l55-12M1225 690l55-24M1082 768l60-34" />
            <path d="M1235 100l45 80M1225 620l55 90M1125 736l20 32M1180 736l18 32" />
        </g>
    </svg>
);

const LAUNCHERS: { label: string; art: React.ReactNode }[] = [
    {
        label: 'Menu',
        art: (
            <>
                <circle cx="12" cy="12" r="11" stroke="#dedede" strokeWidth="1.600" />
                <path d="M6.500 6.500v7.500a3 3 0 003 3h5a3 3 0 003-3v-3a1.900 1.900 0 00-3.700 0v3M13.800 11a1.900 1.900 0 00-3.700 0v3" stroke="#dedede" strokeWidth="1.900" />
            </>
        ),
    },
    {
        label: 'Show desktop',
        art: (
            <>
                <rect x="1" y="2" width="22" height="19" fill="#8ab156" />
                <rect x="1" y="2" width="22" height="4" fill="#6b8a45" />
                <path d="M1 6.500h22" stroke="#55703a" />
            </>
        ),
    },
    {
        label: 'Firefox',
        art: (
            <>
                <rect x="2" y="2" width="20" height="20" rx="4" fill="#f5924a" />
                <path d="M6.500 6c-1 2-2 4-1.500 6.500a7 7 0 0014-.5c0-3-1-5-3-6 1 2 1 3 .5 4-1.500-3-3-3.500-5-4 1.500 1.500 1 3 0 3.500L10 10c-1-.5-2.500-.5-3.500-4z" fill="#fff" />
                <path d="M9 11c2 .5 3 1.500 2 2.500 2 1 4 .5 5-1.500-.5 4-5.500 5-7.500 2z" fill="#f5924a" />
            </>
        ),
    },
    {
        label: 'Terminal',
        art: (
            <>
                <rect x="1.500" y="1.500" width="21" height="20" rx="3" fill="#2b2b2b" stroke="#151515" />
                <text x="4" y="9.500" fontFamily='"DejaVu Sans Mono", monospace' fontSize="7" fontWeight="bold" fill="#fff">$_</text>
            </>
        ),
    },
    {
        label: 'Files',
        art: (
            <>
                <path d="M4 5V3h6l1 1h8v3H4z" fill="#fff" />
                <path d="M1 5h10l2 1h10v15H1z" fill="#8ab156" />
            </>
        ),
    },
];

const Task: React.FC<{ label: string; tint: string; active?: boolean; children: React.ReactNode }> = ({ label, tint, active, children }) => (
    <button className={`flex h-full w-[200px] items-center gap-2.5 pl-1 text-[13px] ${active ? 'bg-[#93b274] text-white' : 'text-[#d6d6d6]'}`}>
        <svg viewBox="0 0 14 14" className="size-3.5 shrink-0" aria-hidden="true">
            <rect width="14" height="14" rx="2" fill={tint} />
            {children}
        </svg>
        <span className="truncate">{label}</span>
    </button>
);

const TRAY: { label: string; art: React.ReactNode }[] = [
    {
        label: 'Notifications',
        art: (
            <path d="M12 1.500c1 0 1.500.6 1.500 1.500 3 .8 4.500 3 4.500 6 0 5 1 7 3 8.500V19H3v-1.500C5 16 6 14 6 9c0-3 1.500-5.200 4.500-6 0-.9.5-1.500 1.500-1.500zM9.500 20.500h5c-.5 1.300-1.300 2-2.500 2s-2-.7-2.500-2z" fill="#dedede" />
        ),
    },
    {
        label: 'Bluetooth',
        art: (
            <>
                <rect x="4" y="1" width="16" height="22" rx="8" fill="#dedede" />
                <path d="M8 8l8 8-4 3.500v-15L16 8l-8 8" fill="none" stroke="#3a3a3a" strokeWidth="1.600" />
            </>
        ),
    },
    {
        label: 'Wi-Fi',
        art: (
            <g fill="none" strokeWidth="2.800">
                <path d="M1 8a16 16 0 0122 0" stroke="#777" />
                <path d="M4 12a11.500 11.500 0 0116 0M7.500 16a6.500 6.500 0 019 0" stroke="#dedede" />
                <path d="M12 23l-4-4a5.500 5.500 0 018 0z" fill="#dedede" />
            </g>
        ),
    },
    {
        label: 'Network',
        art: (
            <g fill="#dedede" stroke="#dedede" strokeWidth="1.600">
                <path d="M13 12L7 4m6 8l7-8m-7 8l7 8m-7-8l-6 8m6-8L2 14" />
                <circle cx="13" cy="12" r="3" fill="#3a3a3a" />
                <circle cx="7" cy="4" r="1.500" />
                <circle cx="20" cy="4" r="1.800" fill="#3a3a3a" />
                <circle cx="20.500" cy="20.500" r="1.500" />
                <circle cx="7" cy="20.500" r="1.500" />
                <circle cx="2" cy="14" r="1" />
            </g>
        ),
    },
    {
        label: 'Battery',
        art: (
            <>
                <path d="M4 4.500h4V2h7v2.500h4V22H4z" fill="none" stroke="#dedede" strokeWidth="2.400" />
                <path d="M7 9.500h9M7 13.500h9M7 17.500h7" stroke="#dedede" strokeWidth="2.200" />
                <path d="M20 11l-7 7h4l-3 6 9-8h-4z" fill="#9a9a9a" stroke="#3a3a3a" strokeWidth="0.600" />
            </>
        ),
    },
    {
        label: 'Volume',
        art: (
            <g fill="none" strokeWidth="2.200">
                <path d="M1 8h4l6-6v20l-6-6H1z" fill="#dedede" />
                <path d="M13 8c2 2 2 6 0 8M15.500 4.500c4 4 4 11 0 15" stroke="#dedede" />
                <path d="M19 2c5 5 5 15 0 20" stroke="#777" />
            </g>
        ),
    },
];

const App: React.FC = () => (
    <main className="relative flex h-screen flex-col overflow-hidden bg-[#141414] font-['Noto_Sans','Open_Sans',sans-serif]">
        <Wallpaper />
        <svg viewBox="0 0 48 36" className="absolute top-[30px] left-12 h-9 w-12" aria-hidden="true">
            <path d="M3 1h16v5H3z" fill="#eee" />
            <path d="M0 4h48v29H0z" fill="#719a44" />
        </svg>
        <WriterWindow />
        <CalcWindow />
        <svg viewBox="0 0 9 16" className="absolute top-[482px] left-[969px] h-4 w-[9px]" fill="none" aria-hidden="true">
            <path d="M1 1.500h2.500l1 1 1-1H8M1 14.500h2.500l1-1 1 1H8M4.500 2v12" stroke="#fff" strokeWidth="3" />
            <path d="M1 1.500h2.500l1 1 1-1H8M1 14.500h2.500l1-1 1 1H8M4.500 2v12" stroke="#111" strokeWidth="1.400" />
        </svg>
        <footer className="relative mt-auto flex h-[33px] items-center border-t border-[#333] bg-[#3a3a3a]">
            {LAUNCHERS.map(({ label, art }) => (
                <button key={label} aria-label={label} className="flex w-8 justify-center">
                    <svg viewBox="0 0 24 24" className="size-6" fill="none" aria-hidden="true">{art}</svg>
                </button>
            ))}
            <Task label="Untitled 1 - LibreOffice Writer" tint="#1f7fc0">
                <path d="M3 3h5l3 3v5H3z" fill="#8ec6ec" />
                <path d="M4 6h4M4 8h6" stroke="#1f6ea8" />
            </Task>
            <Task label="Untitled 2 - LibreOffice Calc" tint="#1fae1a" active>
                <path d="M3 4h8v6H3z" fill="#e8ffe0" />
                <path d="M5.500 4v6M8.500 4v6" stroke="#1fae1a" />
            </Task>
            <div className="ml-auto flex items-center text-[#dedede]">
                {TRAY.map(({ label, art }) => (
                    <button key={label} aria-label={label} className="flex w-8 justify-center">
                        <svg viewBox="0 0 24 24" className="size-6 overflow-visible" aria-hidden="true">{art}</svg>
                    </button>
                ))}
                <time className="ml-0.5 pr-0.5 text-[13px]">11:49</time>
            </div>
        </footer>
    </main>
);

export default App;
